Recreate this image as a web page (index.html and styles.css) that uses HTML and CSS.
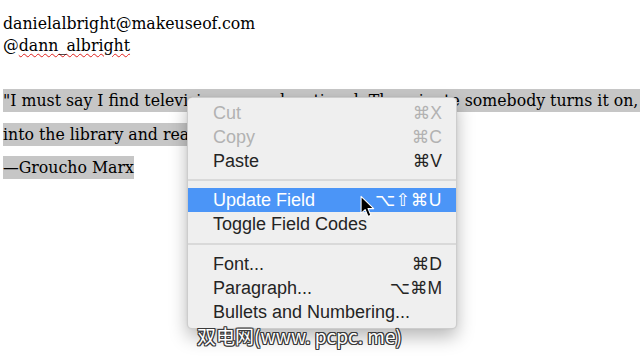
FILE: index.html
```html
<!DOCTYPE html>
<html>
<head>
<meta charset="utf-8">
<link rel="stylesheet" href="styles.css">
</head>
<body>
<div class="doc">
  <div class="contact">
    <div class="cline">danielalbright@makeuseof.com</div>
    <div class="cline">@<span class="spell">dann_albright</span></div>
  </div>
  <div class="quote">
    <div class="qline"><span class="hl">"I must say I find television very educational. The minute somebody turns it on, I go </span></div>
    <div class="qline"><span class="hl">into the library and read a good book."</span></div>
    <div class="qline"><span class="hl">—Groucho Marx</span></div>
  </div>
</div>

<div class="menu">
  <div class="item disabled"><span class="label">Cut</span><span class="key">⌘X</span></div>
  <div class="item disabled"><span class="label">Copy</span><span class="key">⌘C</span></div>
  <div class="item"><span class="label">Paste</span><span class="key">⌘V</span></div>
  <div class="sep"></div>
  <div class="item active"><span class="label">Update Field</span><span class="key wide">⌥⇧⌘U</span></div>
  <div class="item"><span class="label">Toggle Field Codes</span></div>
  <div class="sep sep-b"></div>
  <div class="item"><span class="label">Font...</span><span class="key">⌘D</span></div>
  <div class="item"><span class="label">Paragraph...</span><span class="key">⌥⌘M</span></div>
  <div class="item"><span class="label">Bullets and Numbering...</span></div>
</div>

<svg class="cursor" width="15" height="24" viewBox="0 0 14 22">
  <path d="M1 1 L1 17 L4.8 13.4 L7.5 19.8 L10.2 18.7 L7.5 12.5 L12.8 12.5 Z" fill="#000" stroke="#fff" stroke-width="1" stroke-linejoin="round"/>
</svg>

<div class="watermark">双电网(www. pcpc. me)</div>
</body>
</html>
```

FILE: styles.css
```css
html, body {
  margin: 0;
  padding: 0;
  background: #ffffff;
}

body {
  width: 640px;
  height: 360px;
  overflow: hidden;
  position: relative;
}

.doc {
  padding: 13px 0 0 3px;
  font-family: "DejaVu Serif", "Liberation Serif", serif;
  font-size: 15.75px;
  color: #000;
  white-space: nowrap;
  overflow: hidden;
  height: 347px;
}

.contact {
  line-height: 22px;
}

.spell {
  text-decoration-line: underline;
  text-decoration-style: wavy;
  text-decoration-color: #e0201c;
  text-decoration-thickness: 1px;
  text-underline-offset: 2px;
}

.quote {
  margin-top: 27px;
}

.qline {
  line-height: 33.6px;
}

.hl {
  background: #c6c6c6;
  padding: 2px 0;
}

.menu {
  position: absolute;
  left: 187px;
  top: 97px;
  width: 268px;
  padding: 3px 0 4px;
  background: #efefef;
  border: 1px solid rgba(0, 0, 0, 0.14);
  border-radius: 5px;
  box-shadow: 0 8px 18px rgba(0, 0, 0, 0.28), 0 0 2px rgba(0, 0, 0, 0.08);
  font-family: "Liberation Sans", "DejaVu Sans", sans-serif;
  font-size: 18px;
  color: #242424;
}

.item {
  display: flex;
  align-items: center;
  justify-content: space-between;
  height: 24px;
  padding: 0 14px 0 25px;
}

.item.disabled {
  color: #b2b2b2;
}

.item.active {
  background: #4b95f7;
  color: #ffffff;
}

.key {
  font-family: "Liberation Sans", "DejaVu Sans", sans-serif;
  font-size: 17.5px;
}

.key.wide {
  letter-spacing: 0.5px;
}

.sep {
  height: 2px;
  margin: 6px 0 7px;
  background: #d9d9d9;
}

.sep-b {
  margin: 7px 0 7px;
}

.cursor {
  position: absolute;
  left: 360px;
  top: 195px;
}

.watermark {
  position: absolute;
  left: 197px;
  top: 323px;
  font-family: "Noto Sans CJK SC", "Noto Sans", sans-serif;
  font-size: 19px;
  line-height: 26px;
  color: #ffffff;
  white-space: nowrap;
  text-shadow: 1px 0 0 #3a3a3a, -1px 0 0 #3a3a3a, 0 1px 0 #3a3a3a, 0 -1px 0 #3a3a3a, 1px 1px 0 #3a3a3a, -1px -1px 0 #3a3a3a, 1px -1px 0 #3a3a3a, -1px 1px 0 #3a3a3a;
}
```
